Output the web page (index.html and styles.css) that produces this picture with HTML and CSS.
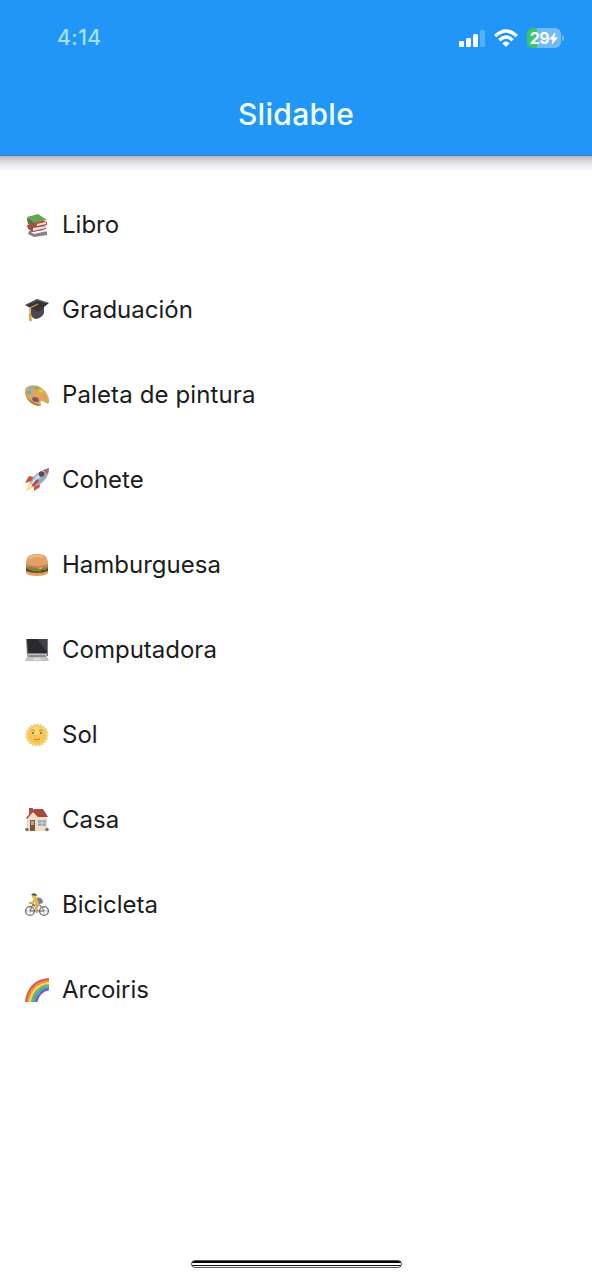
FILE: index.html
```html
<!DOCTYPE html>
<html lang="es">
<head>
<meta charset="utf-8">
<title>Slidable</title>
<link rel="stylesheet" href="styles.css">
</head>
<body>
<div class="screen">
  <header class="appbar">
    <div class="status">
      <span class="time">4:14</span>
      <div class="indicators">
        <svg class="signal" viewBox="0 0 26 17" fill="#fff"><rect x="0" y="11" width="5" height="6" rx="1.3"/><rect x="7" y="8" width="5" height="9" rx="1.3"/><rect x="14" y="4" width="5" height="13" rx="1.3"/><rect x="21" y="0" width="5" height="17" rx="1.3" opacity=".25"/></svg>
        <svg class="wifi" viewBox="0 0 24 19" fill="none" stroke="#fff" stroke-width="3.3"><path d="M1.2 7.1Q12-3.2 22.8 7.1"/><path d="M5.3 11.2Q12 5 18.7 11.2"/><path d="M8.4 14.2Q12 11 15.6 14.2L12 18Z" fill="#fff" stroke="none"/></svg>
        <div class="battery"><span class="level">29</span><svg class="bolt" viewBox="0 0 10 14"><path d="M7 0L0 8h4L3 14l7-8H6Z" fill="#fff"/></svg></div>
        <span class="cap"></span>
      </div>
    </div>
    <h1 class="title">Slidable</h1>
  </header>
  <div class="shade"></div>
  <ul class="list">
    <li class="row"><svg class="icon" viewBox="0 0 24 24"><path d="M4 18l13-2 5 3v3l-13 2-6-3Z" fill="#8b7f86"/><path d="M6 19l14-2 2 1-13 3Z" fill="#fff"/><path d="M2 12l14-2 5 3v3L8 19l-5-3Z" fill="#a84848"/><path d="M8 15l13-2v2L8 18Z" fill="#eee5e0"/><path d="M2 6l14 1 6 2v3L8 14l-5-3Z" fill="#c94336"/><path d="M12 11l9-2v2l-9 2Z" fill="#f5e9dd"/><path d="M2 4L13 1l9 6-13 3Z" fill="#63a457"/><path d="M2 4l7 6v3L3 9Z" fill="#3f8148"/></svg><span class="label">Libro</span></li>
    <li class="row"><svg class="icon" viewBox="0 0 24 24"><path d="M6 10l13-2v7q-2 5-8 6-4-1-5-4Z" fill="#4a494c"/><path d="M0 7L12 1l12 4-11 9Z" fill="#353438"/><path d="M1 7l11-5 10 3" fill="none" stroke="#68656a"/><path d="M13 6L5 10v8" fill="none" stroke="#ce943f" stroke-width="1.3"/><path d="M4 15h2l1 8H4Z" fill="#dda044"/></svg><span class="label">Graduación</span></li>
    <li class="row"><svg class="icon" viewBox="0 0 24 24"><path d="M0 8C0 3 7 1 13 3c8 3 12 12 11 17-3 2-6-3-8-2-2 2 2 4-1 5C6 23-1 15 0 8Z" fill="#dda65b"/><path d="M1 13q3 8 13 10l1-1Q5 19 1 13Z" fill="#a97850"/><ellipse cx="10.5" cy="16.5" rx="3.5" ry="2.3" transform="rotate(20 10.5 16.5)" fill="#8b4b73"/><ellipse cx="4" cy="9.5" rx="2.4" ry="1.8" fill="#61a9d5"/><ellipse cx="6" cy="5.5" rx="2.4" ry="1.7" fill="#69bdd0"/><ellipse cx="11.5" cy="5" rx="2.3" ry="1.6" fill="#6fbd5c"/><ellipse cx="16" cy="8" rx="2.3" ry="1.6" fill="#edcc43"/><ellipse cx="20" cy="13" rx="1.6" ry="1.5" fill="#e59a55"/></svg><span class="label wide">Paleta de pintura</span></li>
    <li class="row"><svg class="icon" viewBox="0 0 24 24"><path d="M5 14l-4 9 8-4Z" fill="#ffd373"/><path d="M6 15l-3 6 5-4Z" fill="#fff1a7"/><path d="M9 9L4 8 0 15l7-2Zm5 5l1 5-6 4v-6Z" fill="#d84c38"/><path d="M5 15Q9 4 24 0q0 13-15 19Z" fill="#8badc6"/><path d="M6 15Q12 5 22 1L8 17Z" fill="#cce0eb"/><path d="M18 2l6-2-1 6q-3-1-5-4Z" fill="#b2667a"/><circle cx="16.5" cy="6" r="2.8" fill="#6e4249"/><path d="M12 11l-5 6 1 2 6-6Z" fill="#c53f38"/></svg><span class="label">Cohete</span></li>
    <li class="row"><svg class="icon" viewBox="0 0 24 24"><path d="M1 17h22v3q-2 3-11 3T1 20Z" fill="#e0a05e"/><path d="M1 14h22v4q-11 4-22 0Z" fill="#68432c"/><path d="M1 13q11 3 22 0v2q-3 3-6 2-3 3-6 1-5 1-10-3Z" fill="#718a37"/><path d="M3 13l18-1-5 4Z" fill="#f5c54b"/><path d="M1 11h22v2q-11 4-22 0Z" fill="#d87850"/><path d="M1 11C1 3 5 1 12 1s11 2 11 10q-11 4-22 0Z" fill="#e2a16b"/><path d="M4 6q4-5 14-2" fill="none" stroke="#f0b980" stroke-width="2"/></svg><span class="label">Hamburguesa</span></li>
    <li class="row"><svg class="icon" viewBox="0 0 24 24"><path d="M1 1h22v17H2Z" fill="#7b7b80"/><path d="M2 1h20v14H3Z" fill="#292a2e"/><path d="M12 1h10v13Z" fill="#414247"/><path d="M3 16h18l3 7H0Z" fill="#c2c2c5"/><path d="M4 17h16l1 2H3Z" fill="#88888d"/><path d="M9 20h6l1 2H8Z" fill="#dedee0"/></svg><span class="label">Computadora</span></li>
    <li class="row"><svg class="icon" viewBox="0 0 24 24"><circle cx="12" cy="12" r="10.6" fill="#f6d27b" stroke="#f3cc7c" stroke-width="2" stroke-dasharray="1.7 1.6"/><circle cx="12" cy="12" r="9" fill="#f9c653"/><ellipse cx="12" cy="8" rx="6" ry="4" fill="#fbd873"/><path d="M6 8q2-2 4 0m4 0q2-2 4 0M9 16q3 2 6 0" fill="none" stroke="#b98140"/><circle cx="8" cy="10" r="1" fill="#80592f"/><circle cx="16" cy="10" r="1" fill="#80592f"/></svg><span class="label">Sol</span></li>
    <li class="row"><svg class="icon" viewBox="0 0 24 24"><path d="M4 0h4v8H4Z" fill="#b34b42"/><path d="M2 9L8 3l12 1 2 7v12H2Z" fill="#efdfc8"/><path d="M1 10L9 1h9l5 8H13L8 4l-6 7Z" fill="#a74740"/><path d="M5 12h5v11H5Z" fill="#80553f"/><path d="M6 13h3v4H6Z" fill="#b8a69b"/><path d="M13 12h8v6h-8Z" fill="#9cacbd"/><path d="M17 12v6m-4-3h8" stroke="#eee" stroke-width=".6"/><circle cx="2" cy="21.5" r="1.8" fill="#77747a"/><circle cx="22" cy="21.5" r="1.8" fill="#77747a"/></svg><span class="label">Casa</span></li>
    <li class="row"><svg class="icon" viewBox="0 0 24 24"><g fill="none" stroke="#77767a"><circle cx="5" cy="18" r="4.4" stroke-width="1.4"/><circle cx="19" cy="18" r="4.4" stroke-width="1.4"/><path d="M5 18l3-7 5 7h6l-4-6H8m-3 6h8" stroke="#66666b"/><path d="M5 13.5v9M1 18h8m10-4.5v9M15 18h8" stroke-width=".4"/></g><path d="M8 5l5-1 3 7-5 1Z" fill="#e6b54e"/><path d="M12 5q6-1 6 5l-4 1Z" fill="#78828a"/><path d="M9 7l-1 3-4 0m10 2-3 3 1 5" fill="none" stroke="#dfa842" stroke-width="2"/><circle cx="9" cy="3" r="2.3" fill="#eabd58"/><path d="M6 2q2-3 5-1l1 2Z" fill="#554a41"/></svg><span class="label">Bicicleta</span></li>
    <li class="row"><svg class="icon" viewBox="0 0 24 24" fill="none" stroke-width="2.3"><path d="M1 24Q4 3 24 1.2" stroke="#df5548"/><path d="M3 24Q6 5 24 3.2" stroke="#f18b3e"/><path d="M5 24Q8 7 24 5.2" stroke="#f4d74c"/><path d="M7 24Q10 9 24 7.2" stroke="#62b95c"/><path d="M9 24Q12 11 24 9.2" stroke="#4a9bd5"/><path d="M11 24Q14 13 24 11.2" stroke="#7659ad"/></svg><span class="label">Arcoiris</span></li>
  </ul>
  <div class="home"></div>
</div>
</body>
</html>
```
FILE: styles.css
```css
* { box-sizing: border-box; }
body { margin: 0; background: #fff; font-family: Inter, "Liberation Sans", sans-serif; }
.screen { width: 592px; height: 1280px; display: flex; flex-direction: column; background: #fff; overflow: hidden; }
.appbar { height: 156px; flex: none; background: #2196f6; border-bottom: 1px solid #337fc0; }
.status { height: 76px; padding: 0 30px 0 57px; display: flex; align-items: center; justify-content: space-between; }
.time { color: #a5e0ff; font-size: 21px; font-weight: 500; line-height: 24px; letter-spacing: .5px; }
.indicators { display: flex; align-items: center; }
.signal { width: 26px; height: 17px; margin-right: 9px; }
.wifi { width: 24px; height: 19px; margin-right: 9px; }
.battery { width: 34px; height: 20px; border-radius: 6px; background: linear-gradient(90deg, #39c769 0 10px, #72bbf7 10px); display: flex; align-items: center; justify-content: center; }
.level { color: #fff; font-size: 16px; font-weight: 700; line-height: 20px; letter-spacing: -.5px; }
.bolt { width: 9px; height: 13px; }
.cap { width: 2px; height: 6px; margin-left: 1px; margin-right: -2px; border-radius: 0 2px 2px 0; background: #72bbf7; }
.title { margin: 18px 0 0; text-align: center; color: #f0ffff; font-size: 30px; font-weight: 500; line-height: 40px; letter-spacing: .3px; }
.shade { height: 14px; flex: none; background: linear-gradient(#b5b4b8, #d8d6da 35%, #f0eef2 70%, #f7f6f8); }
.list { list-style: none; margin: 0; padding: 12px 0 0 25px; flex: 1; }
.row { height: 85px; display: flex; align-items: center; gap: 13px; }
.icon { width: 24px; height: 24px; }
.label { color: #1c1c20; font-size: 24px; line-height: 30px; white-space: nowrap; }
.wide { letter-spacing: .12px; }
.home { width: 211px; height: 8px; flex: none; margin: 0 auto 12px 191px; border-radius: 4px; border: 1px solid #555; background: linear-gradient(#050505 0 2px, #fff 2px 4px, #111 4px 5px, #fff 5px); }
```
